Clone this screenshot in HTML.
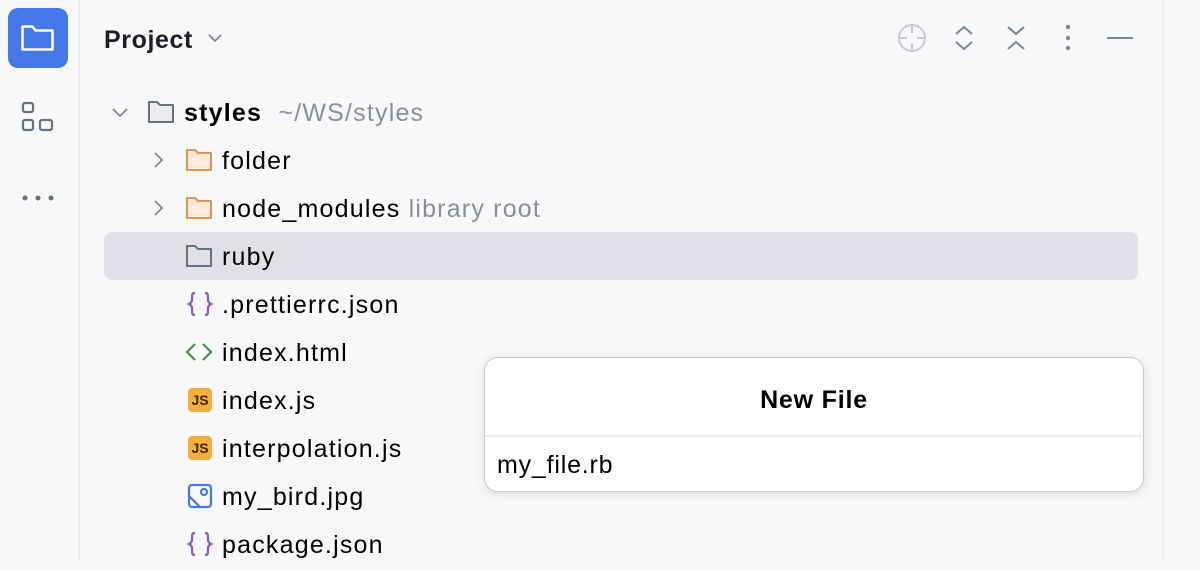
<!DOCTYPE html>
<html><head><meta charset="utf-8"><style>
*{margin:0;padding:0;box-sizing:border-box}
body{width:1200px;height:560px;overflow:hidden;background:#f7f8fa;font-family:"Liberation Sans",sans-serif;color:#000;position:relative}
.sb{position:absolute;left:0;top:0;width:80px;height:560px;border-right:2px solid #ebecf0}
.rb{position:absolute;left:1162px;top:0;width:2px;height:560px;background:#ebecf0}
.row{position:absolute;height:48px;line-height:50px;font-size:25px;letter-spacing:1.2px;white-space:nowrap}
.gray{color:#8c8f99}
svg{position:absolute}
</style></head><body>
<div class="sb"></div>
<div class="rb"></div>
<div style="position:absolute;left:8px;top:8px;width:60px;height:60px;border-radius:10px;background:#4577e8"></div>
<svg style="left:20px;top:20px" width="36" height="36" viewBox="0 0 36 36"><path d="M2.5 6.5h10l3 4h17v19h-30z" fill="none" stroke="#fff" stroke-width="2.5" stroke-linejoin="round"/></svg>
<svg style="left:20px;top:100px" width="36" height="36" viewBox="0 0 36 36" fill="none" stroke="#6c707e" stroke-width="2.2"><rect x="3" y="3" width="10" height="9" rx="2"/><rect x="3" y="20" width="10" height="10" rx="2"/><rect x="20" y="20" width="12" height="10" rx="2"/></svg>
<svg style="left:20px;top:190px" width="36" height="16" viewBox="0 0 36 16" fill="#6c707e"><circle cx="5" cy="8" r="2.5"/><circle cx="18" cy="8" r="2.5"/><circle cx="31" cy="8" r="2.5"/></svg>

<div class="row" style="left:104px;top:15px;font-weight:bold;font-size:25px;letter-spacing:0.6px;color:#1e1f22">Project</div>
<svg style="left:206px;top:32px" width="18" height="12" viewBox="0 0 18 12"><path d="M3 3l6 6 6-6" fill="none" stroke="#818594" stroke-width="1.8"/></svg>

<svg style="left:896px;top:22px" width="32" height="32" viewBox="0 0 32 32" fill="none" stroke="#c9cbd1" stroke-width="2"><circle cx="16" cy="16" r="13"/><path d="M16 3v8M16 21v8M3 16h8M21 16h8"/></svg>
<svg style="left:952px;top:24px" width="24" height="28" viewBox="0 0 24 28" fill="none" stroke="#818594" stroke-width="2"><path d="M4 10l8-7 8 7M4 18l8 7 8-7"/></svg>
<svg style="left:1004px;top:24px" width="24" height="28" viewBox="0 0 24 28" fill="none" stroke="#818594" stroke-width="2"><path d="M4 3l8 7 8-7M4 25l8-7 8 7"/></svg>
<svg style="left:1060px;top:24px" width="16" height="28" viewBox="0 0 16 28" fill="#818594"><circle cx="8" cy="3" r="2.2"/><circle cx="8" cy="14" r="2.2"/><circle cx="8" cy="24" r="2.2"/></svg>
<div style="position:absolute;left:1107px;top:37px;width:26px;height:2px;background:#818594"></div>

<div style="position:absolute;left:104px;top:232px;width:1034px;height:48px;border-radius:8px;background:#dfe1e5"></div>

<svg style="left:110px;top:102px" width="20" height="20" viewBox="0 0 20 20"><path d="M3 7l7 7 7-7" fill="none" stroke="#818594" stroke-width="1.8"/></svg>
<svg style="left:146px;top:98px" width="30" height="28" viewBox="0 0 30 28"><path d="M3 4h8l3 3h13v17H3z" fill="#ebecf0" stroke="#6c707e" stroke-width="2" stroke-linejoin="round"/></svg>
<div class="row" style="left:184px;top:88px"><b>styles</b>&nbsp; <span class="gray">~/WS/styles</span></div>

<svg style="left:148px;top:150px" width="20" height="20" viewBox="0 0 20 20"><path d="M7 3l7 7-7 7" fill="none" stroke="#818594" stroke-width="1.8"/></svg>
<svg style="left:184px;top:146px" width="30" height="28" viewBox="0 0 30 28"><path d="M3 4h8l3 3h13v17H3z" fill="#fcebdc" stroke="#e29450" stroke-width="2" stroke-linejoin="round"/></svg>
<div class="row" style="left:222px;top:136px">folder</div>

<svg style="left:148px;top:198px" width="20" height="20" viewBox="0 0 20 20"><path d="M7 3l7 7-7 7" fill="none" stroke="#818594" stroke-width="1.8"/></svg>
<svg style="left:184px;top:194px" width="30" height="28" viewBox="0 0 30 28"><path d="M3 4h8l3 3h13v17H3z" fill="#fcebdc" stroke="#e29450" stroke-width="2" stroke-linejoin="round"/></svg>
<div class="row" style="left:222px;top:184px">node_modules <span class="gray">library root</span></div>

<svg style="left:184px;top:242px" width="30" height="28" viewBox="0 0 30 28"><path d="M3 4h8l3 3h13v17H3z" fill="none" stroke="#6c707e" stroke-width="2" stroke-linejoin="round"/></svg>
<div class="row" style="left:222px;top:232px">ruby</div>

<svg style="left:186px;top:290px" width="28" height="28" viewBox="0 0 28 28" fill="none" stroke="#8654e4" stroke-width="2.2"><path d="M9 3c-3 0-3 2-3 4v3c0 2-1 3-3 4 2 1 3 2 3 4v3c0 2 0 4 3 4M19 3c3 0 3 2 3 4v3c0 2 1 3 3 4-2 1-3 2-3 4v3c0 2 0 4-3 4"/></svg>
<div class="row" style="left:222px;top:280px">.prettierrc.json</div>

<svg style="left:184px;top:340px" width="30" height="24" viewBox="0 0 30 24" fill="none" stroke="#4d8f4d" stroke-width="2.2"><path d="M11 4l-8 8 8 8M19 4l8 8-8 8"/></svg>
<div class="row" style="left:222px;top:328px">index.html</div>

<div style="position:absolute;left:188px;top:388px;width:24px;height:24px;border-radius:4px;background:#f4af3d;font:bold 14px/24px 'Liberation Sans',sans-serif;text-align:center;color:#3c2a00">JS</div>
<div class="row" style="left:222px;top:376px">index.js</div>

<div style="position:absolute;left:188px;top:436px;width:24px;height:24px;border-radius:4px;background:#f4af3d;font:bold 14px/24px 'Liberation Sans',sans-serif;text-align:center;color:#3c2a00">JS</div>
<div class="row" style="left:222px;top:424px">interpolation.js</div>

<svg style="left:186px;top:482px" width="28" height="28" viewBox="0 0 28 28" fill="none" stroke="#4577e8" stroke-width="2.2"><rect x="3" y="3" width="22" height="22" rx="3"/><circle cx="18" cy="10" r="3"/><path d="M3 14l11 11"/></svg>
<div class="row" style="left:222px;top:472px">my_bird.jpg</div>

<svg style="left:186px;top:530px" width="28" height="28" viewBox="0 0 28 28" fill="none" stroke="#8654e4" stroke-width="2.2"><path d="M9 3c-3 0-3 2-3 4v3c0 2-1 3-3 4 2 1 3 2 3 4v3c0 2 0 4 3 4M19 3c3 0 3 2 3 4v3c0 2 1 3 3 4-2 1-3 2-3 4v3c0 2 0 4-3 4"/></svg>
<div class="row" style="left:222px;top:520px">package.json</div>

<div style="position:absolute;left:484px;top:357px;width:660px;height:135px;background:#fff;border:1px solid #c9cbd1;border-radius:14px;box-shadow:0 2px 10px rgba(0,0,0,.12)">
  <div style="height:79px;line-height:84px;text-align:center;font-weight:bold;font-size:25px;letter-spacing:0.8px;border-bottom:2px solid #ebecf0">New File</div>
  <div style="padding-left:12px;line-height:56px;font-size:25px;letter-spacing:0.8px">my_file.rb</div>
</div>
</body></html>
